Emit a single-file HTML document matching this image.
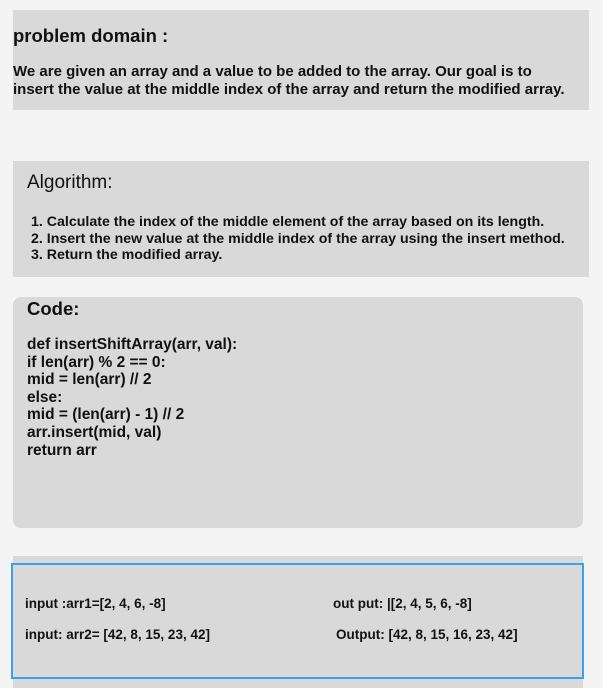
<!DOCTYPE html>
<html><head><meta charset="utf-8"><style>
*{margin:0;padding:0;box-sizing:border-box}
body{width:603px;height:688px;background:#f4f4f4;font-family:"Liberation Sans",sans-serif;color:#111;position:relative;overflow:hidden}
.b{position:absolute;background:#d9d9d9}
.t{position:absolute;white-space:nowrap}
</style></head><body>
<div class="b" style="left:13px;top:10px;width:576px;height:100px"></div>
<div class="t" style="left:13px;top:25px;font-size:18.5px;font-weight:bold">problem domain :</div>
<div class="t" style="left:13px;top:63px;font-size:15px;font-weight:bold;line-height:17.5px">We are given an array and a value to be added to the array. Our goal is to<br>insert the value at the middle index of the array and return the modified array.</div>

<div class="b" style="left:13px;top:161px;width:576px;height:116px"></div>
<div class="t" style="left:27px;top:172px;font-size:19px">Algorithm:</div>
<div class="t" style="left:31px;top:214px;font-size:14.2px;font-weight:bold;line-height:16.7px">1. Calculate the index of the middle element of the array based on its length.<br>2. Insert the new value at the middle index of the array using the insert method.<br>3. Return the modified array.</div>

<div class="b" style="left:13px;top:297px;width:570px;height:231px;border-radius:8px"></div>
<div class="t" style="left:27px;top:298px;font-size:18.5px;font-weight:bold">Code:</div>
<div class="t" style="left:27px;top:336px;font-size:15.5px;font-weight:bold;line-height:17.6px">def insertShiftArray(arr, val):<br>if len(arr) % 2 == 0:<br>mid = len(arr) // 2<br>else:<br>mid = (len(arr) - 1) // 2<br>arr.insert(mid, val)<br>return arr</div>

<div class="b" style="left:13px;top:556px;width:570px;height:132px"></div>
<div style="position:absolute;left:11px;top:563px;width:573px;height:116px;border:2px solid #3aa0f0"></div>
<div class="t" style="left:25px;top:596px;font-size:13.5px;font-weight:bold">input :arr1=[2, 4, 6, -8]</div>
<div class="t" style="left:333px;top:596px;font-size:13.5px;font-weight:bold">out put: |[2, 4, 5, 6, -8]</div>
<div class="t" style="left:25px;top:627px;font-size:13.5px;font-weight:bold">input: arr2= [42, 8, 15, 23, 42]</div>
<div class="t" style="left:336px;top:627px;font-size:13.5px;font-weight:bold">Output: [42, 8, 15, 16, 23, 42]</div>
</body></html>
